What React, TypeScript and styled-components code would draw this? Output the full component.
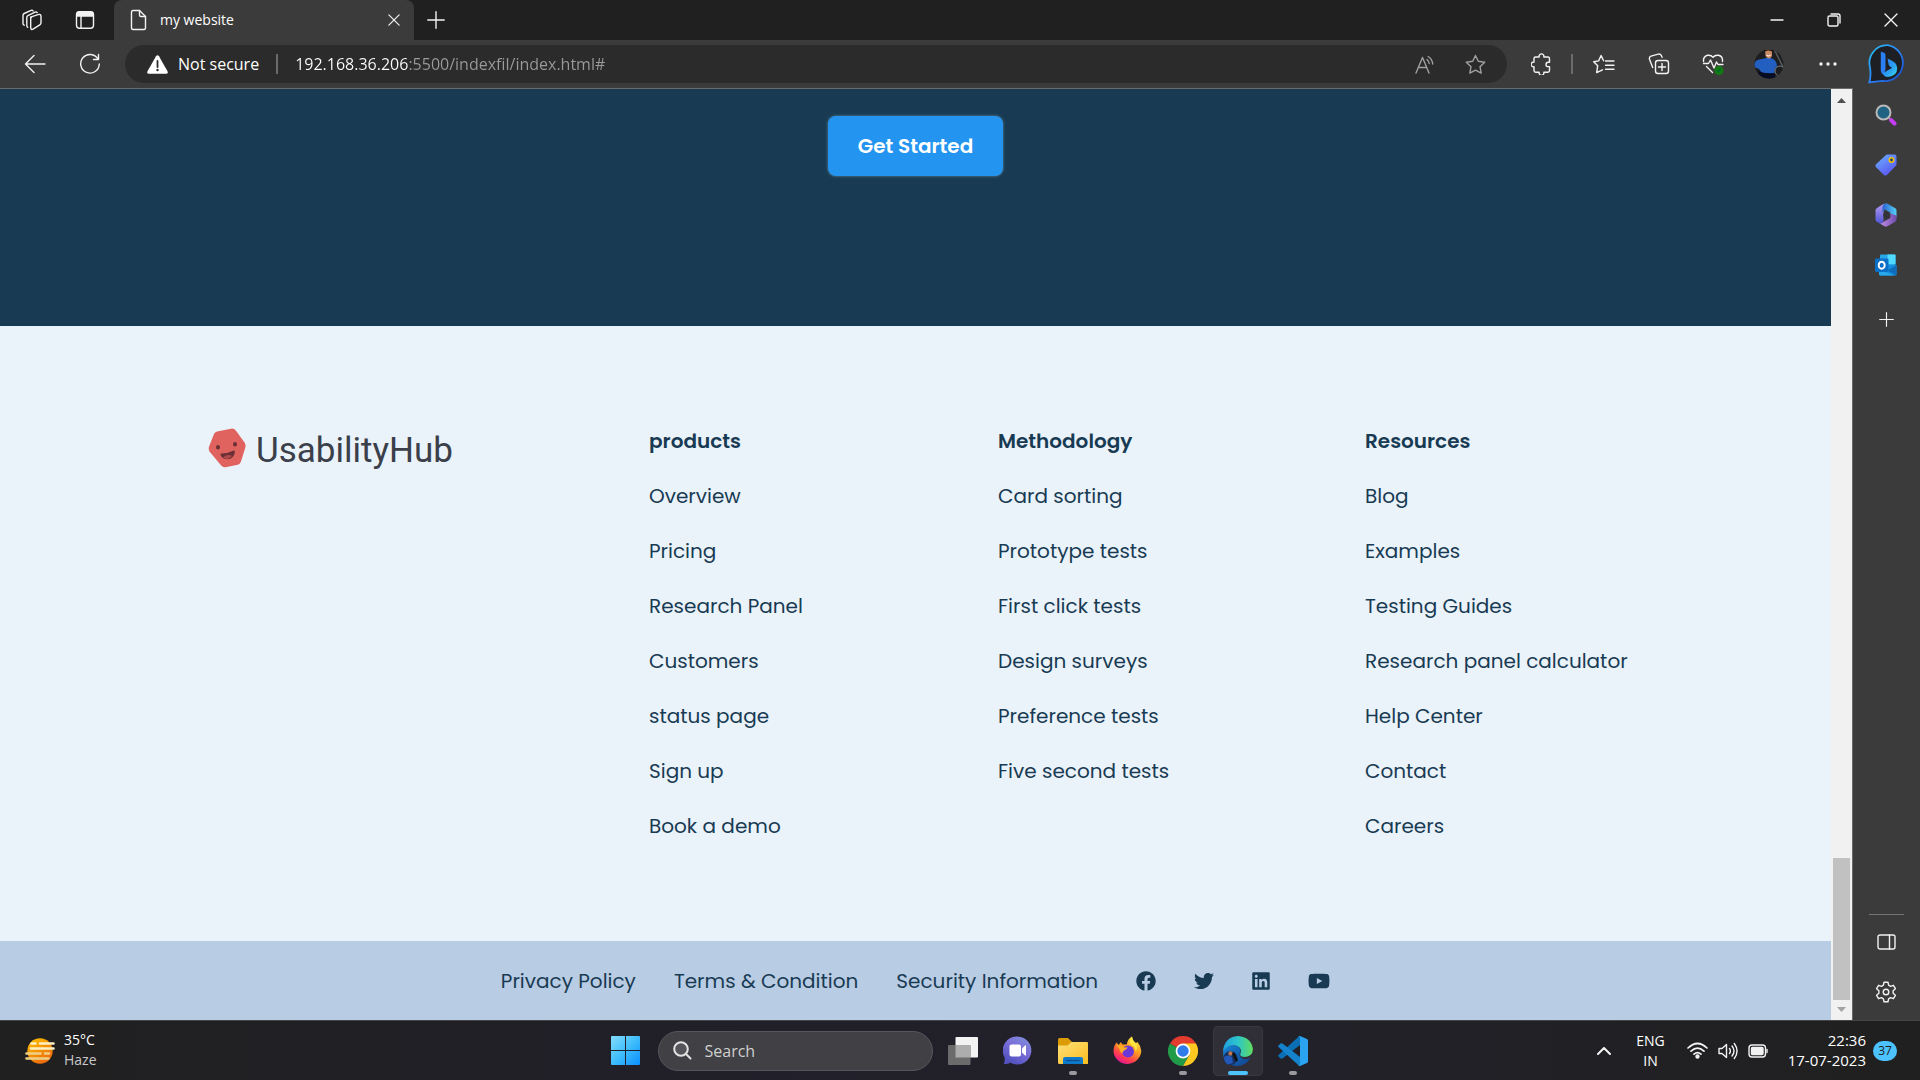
import React from "react";
import styled, { createGlobalStyle } from "styled-components";
import { FaFacebook, FaLinkedin, FaTwitter, FaYoutube } from "react-icons/fa";

const uiFont = `"Segoe UI", "Open Sans", "Noto Sans", sans-serif`;
const siteFont = `Poppins, Inter, "Open Sans", sans-serif`;

const GlobalStyle = createGlobalStyle`
  *, *::before, *::after { box-sizing: border-box; }
  body { margin: 0; background: #202020; font-family: ${uiFont}; }
  button { border: 0; padding: 0; background: none; color: inherit; font: inherit; cursor: pointer; }
  a { color: inherit; text-decoration: none; }
  svg { display: block; flex: none; }
  ul { list-style: none; margin: 0; padding: 0; }
`;

const Desktop = styled.div`
  display: flex;
  flex-direction: column;
  min-height: 100vh;
`;

/* ---------- browser chrome ---------- */

const TabStrip = styled.header`
  display: flex;
  height: 40px;
  padding-left: 5px;
  background: #202020;
  color: #fff;
`;

const IconButton = styled.button<{ $w?: number }>`
  display: flex;
  flex: none;
  align-items: center;
  justify-content: center;
  width: ${(p) => p.$w ?? 55}px;
  height: 40px;
`;

const Tab = styled.div`
  display: flex;
  align-items: center;
  width: 300px;
  margin-left: 3px;
  padding-left: 16px;
  border-radius: 8px 8px 0 0;
  background: #3b3b3b;
`;

const TabTitle = styled.span`
  flex: 1;
  padding-left: 13px;
  font-size: 14px;
  line-height: 20px;
`;

const WindowButtons = styled.div`
  display: flex;
  margin-left: auto;
`;

const Toolbar = styled.div`
  display: flex;
  align-items: center;
  height: 48px;
  padding: 0 5px 0 7px;
  background: #3b3b3b;
  color: #fff;
`;

const AddressBar = styled.div`
  display: flex;
  flex: 1;
  align-items: center;
  height: 38px;
  margin: 0 7px 0 8px;
  padding: 0 7px 0 22px;
  border-radius: 19px;
  background: #2b2b2b;
  font-size: 16px;
`;

const SecurityLabel = styled.span`
  padding-left: 10px;
  line-height: 24px;
`;

const Separator = styled.span<{ $gap: number }>`
  flex: none;
  width: 2px;
  height: 20px;
  margin: 0 ${(p) => p.$gap}px;
  background: #6b6b6b;
`;

const AddressInput = styled.input`
  flex: 1;
  min-width: 0;
  height: 30px;
  padding: 0;
  border: 0;
  outline: 0;
  color: #9a9a9a;
  font: 16px ${uiFont};
  background: linear-gradient(90deg, #fff 113px, #9a9a9a 113px);
  background-clip: text;
  -webkit-background-clip: text;
  -webkit-text-fill-color: transparent;
`;

const BrowserBody = styled.div`
  display: flex;
  flex: 1;
  background: #3b3b3b;
`;

const Viewport = styled.main`
  display: flex;
  flex: 1;
  border-top: 1px solid #6a6a6a;
  border-right: 1px solid #6a6a6a;
`;

const ScrollTrack = styled.div`
  display: flex;
  flex-direction: column;
  align-items: center;
  justify-content: space-between;
  width: 21px;
  padding: 9px 2px 8px;
  background: #f1f1f1;
`;

const ScrollThumb = styled.div`
  width: 17px;
  height: 142px;
  margin: auto 0 7px;
  background: #c1c1c1;
`;

const Sidebar = styled.aside`
  display: flex;
  flex-direction: column;
  align-items: center;
  width: 67px;
  padding: 2px 1px 3px 0;
  color: #fff;
`;

const SideButton = styled.button<{ $gap?: number }>`
  display: flex;
  align-items: center;
  justify-content: center;
  width: 50px;
  height: 50px;
  margin-top: ${(p) => p.$gap ?? 0}px;
`;

const SideRule = styled.div`
  width: 35px;
  height: 1px;
  margin: auto 0 2px;
  background: #757575;
`;

/* ---------- web page ---------- */

const Page = styled.div`
  flex: 1;
  background: #eaf2fa;
  color: #183b53;
  font-family: ${siteFont};
`;

const Hero = styled.section`
  display: flex;
  justify-content: center;
  padding: 27px 0 150px;
  background: #183b53;
`;

const CallToAction = styled.button`
  && {
    height: 60px;
    padding: 0 30px;
    border-radius: 8px;
    background: #2394ef;
    box-shadow: 0 0 3px rgba(150, 190, 220, 0.6);
    color: #fff;
    font: 600 20px ${siteFont};
  }
`;

const FooterGrid = styled.footer`
  display: grid;
  grid-template-columns: 441fr 349fr 367fr 466fr;
  padding: 100px 0 100px 208px;
`;

const Brand = styled.a`
  display: flex;
  align-items: center;
  align-self: start;
  gap: 10px;
  height: 44px;
  color: #3a3f4a;
  font: 35px Roboto, sans-serif;
`;

const BrandName = styled.span`
  padding-top: 4px;
`;

const LinkColumn = styled.ul`
  display: flex;
  flex-direction: column;
  gap: 25px;
  font-size: 20px;
  line-height: 30px;
`;

const ColumnTitle = styled.li`
  font-weight: 600;
`;

const LegalBar = styled.nav`
  display: flex;
  align-items: center;
  justify-content: center;
  gap: 38px;
  padding: 25px 0 24px;
  background: #b8cce4;
  font-size: 20px;
  line-height: 30px;
`;

const SocialLink = styled.a<{ $w: number }>`
  svg {
    width: ${(p) => p.$w}px;
    height: 20px;
  }
`;

/* ---------- taskbar ---------- */

const Taskbar = styled.footer`
  display: grid;
  grid-template-columns: 1fr auto 1fr;
  align-items: center;
  height: 60px;
  padding: 0 23px 0 21px;
  border-top: 1px solid #454547;
  background: linear-gradient(90deg, #202020, #211f29 40%, #22212a 62%, #202020);
  color: #fff;
  font-size: 14px;
  line-height: 20px;
`;

const Weather = styled.button`
  display: flex;
  align-items: center;
  justify-self: start;
  gap: 9px;
  margin-left: 4px;
  text-align: left;
`;

const Lines = styled.span<{ $align?: string }>`
  display: flex;
  flex-direction: column;
  padding-bottom: ${(p) => (p.$align === "center" ? 0 : 2)}px;
  font-size: ${(p) => (p.$align === "right" ? 15 : 14)}px;
  text-align: ${(p) => p.$align ?? "left"};
`;

const Muted = styled.span`
  color: #c8c8c8;
`;

const Apps = styled.div`
  display: flex;
  align-items: center;
  gap: 5px;
`;

const AppButton = styled.button<{ $active?: boolean }>`
  position: relative;
  display: flex;
  align-items: center;
  justify-content: center;
  width: 50px;
  height: 50px;
  border-radius: 5px;
  background: ${(p) => (p.$active ? "#302f38" : "none")};
  box-shadow: ${(p) => (p.$active ? "inset 0 0 0 1px #3a3942" : "none")};
`;

const RunningMark = styled.span<{ $active?: boolean }>`
  position: absolute;
  bottom: 1px;
  left: 50%;
  width: ${(p) => (p.$active ? 20 : 8)}px;
  height: 4px;
  border-radius: 2px;
  background: ${(p) => (p.$active ? "#4cc2ff" : "#9a999d")};
  transform: translateX(-50%);
`;

const SearchBox = styled.label`
  display: flex;
  align-items: center;
  gap: 13px;
  width: 275px;
  height: 40px;
  margin-left: 2px;
  padding-left: 14px;
  border: 1px solid #57555c;
  border-radius: 20px;
  background: #414045;
`;

const SearchInput = styled.input`
  flex: 1;
  min-width: 0;
  padding: 0;
  border: 0;
  outline: 0;
  background: none;
  color: #fff;
  font: 16px ${uiFont};
  &::placeholder { color: #d0d0d0; opacity: 1; }
`;

const Tray = styled.div`
  display: flex;
  align-items: center;
  justify-self: end;
`;

const TrayGroup = styled.button`
  display: flex;
  align-items: center;
  gap: 10px;
  margin: 0 20px 0 22px;
`;

const Badge = styled.span`
  width: 24px;
  height: 20px;
  margin-left: 7px;
  border-radius: 10px;
  background: #4cc2ff;
  color: #1b1b1b;
  font-size: 12px;
  line-height: 20px;
  text-align: center;
`;

/* ---------- drawings ---------- */

const Line = styled.svg.attrs({ fill: "none", stroke: "currentColor", strokeLinecap: "round", strokeLinejoin: "round" })<{ $dim?: boolean }>`
  color: ${(p) => (p.$dim ? "#a0a0a0" : "#f2f2f2")};
  stroke-width: 1.4;
`;

const Workspaces = () => (
  <Line width="22" height="22" viewBox="0 0 22 22">
    <path d="M9.5 8.2 17 5.6q3-.8 3 1.7v6.5q0 1.4-1.2 2L12 20.2q-2 .9-2.3-1.3V9.8q0-1.2 1-1.7" />
    <path d="M6.8 18.3q-1-.4-1-1.7V8.4q0-1.3 1.1-1.8l7.2-3.4q1.4-.5 2.1.4" />
    <path d="M3.2 16.2q-1.2-.5-1.2-2V6.4q0-1.3 1.2-1.9L9.5 1.6q1.7-.7 2.6.3" />
  </Line>
);
const TabActions = () => (
  <Line width="20" height="20" viewBox="0 0 20 20">
    <rect x="1.5" y="1.8" width="17" height="16.4" rx="3" />
    <path d="M2 3.5Q2.4 2 4 2h12q1.6 0 2 1.5V6H2z" fill="currentColor" />
    <path d="M6 6v12" />
  </Line>
);
const FileIcon = () => (
  <Line width="17" height="22" viewBox="0 0 17 22">
    <path d="M3 1.5h6.5l6 6V19q0 1.5-1.5 1.5H3Q1.5 20.500 1.500 19V3q0-1.500 1.500-1.500z" />
    <path d="M9.500 1.500V6q0 1.500 1.500 1.500h4.500" />
  </Line>
);
const Cross = ({ size = 12 }: { size?: number }) => (
  <Line width={size} height={size} viewBox="0 0 14 14"><path d="m1 1 12 12M13 1 1 13" /></Line>
);
const Plus = ({ size = 18 }: { size?: number }) => (
  <Line width={size} height={size} viewBox="0 0 18 18"><path d="M9 .8v16.400M.8 9h16.400" /></Line>
);
const BackArrow = () => (
  <Line width="22" height="20" viewBox="0 0 22 20"><path d="M21 10H1.500M10 1.500 1.500 10l8.500 8.500" /></Line>
);
const Reload = () => (
  <Line width="22" height="22" viewBox="0 0 22 22"><path d="M19 6A9.300 9.300 0 1 0 20.300 11M19.500 1.500v5h-5" /></Line>
);
const Warning = () => (
  <svg width="21" height="19" viewBox="0 0 21 19">
    <path d="M9 1.200q1.500-2 3 0l8.500 15q1 2.500-1.500 2.500H2q-2.500 0-1.500-2.500z" fill="#fff" />
    <path d="M10.500 6v6" stroke="#2b2b2b" strokeWidth="1.800" strokeLinecap="round" />
    <circle cx="10.500" cy="15" r="1.200" fill="#2b2b2b" />
  </svg>
);
const ReadAloud = () => (
  <Line $dim width="20" height="19" viewBox="0 0 20 19">
    <path d="M1 18 7.500 2.500 14 18M3.500 12.500h8M12 4.500q1.800 1.500 2.200 4M13.200 1.500q4 2.500 4.500 7.500" />
  </Line>
);
const starPath = "m10.500 1.500 2.800 5.800 6.400.9-4.700 4.500 1.200 6.400-5.700-3-5.700 3 1.200-6.400L1.300 8.200l6.400-.9z";
const Star = () => (
  <Line $dim width="21" height="21" viewBox="0 0 21 21"><path d={starPath} /></Line>
);
const FavoritesList = () => (
  <Line width="22" height="21" viewBox="0 0 22 21">
    <path d="m10.600 6.700-2.500-5.200L5.600 6.900l-4.900.8 4 4-1 6.900 5.800-2.800M12.500 7h8.500M12.500 11.200h8.500M12.500 15.300h8.500" />
  </Line>
);
const Puzzle = () => (
  <Line width="20" height="22" viewBox="0 0 20 22">
    <path d="M4.500 4h3.700a2.400 2.400 0 1 1 4.600 0h4q1.700 0 1.700 1.700v3.500h-1.300a2.200 2.200 0 0 0 0 4.400h1.300v4q0 1.700-1.700 1.700h-4a2.400 2.400 0 1 1-4.600 0H4.700Q3 19.300 3 17.600v-3.800a2.400 2.400 0 1 1 0-4.700V5.500Q3 4 4.500 4z" />
  </Line>
);
const Collections = () => (
  <Line width="22" height="22" viewBox="0 0 22 22">
    <rect x="7.500" y="7.500" width="13" height="13" rx="2.500" />
    <path d="M14 10.500v7M10.500 14h7M4.700 14.500 1.500 6.200Q.9 4 3 3.200l7.300-2.100q2-.5 2.900 1.200l.9 2" />
  </Line>
);
const HeartPulse = () => (
  <Line width="23" height="22" viewBox="0 0 23 22">
    <path d="M1.500 8.500Q1 3.500 5.500 2.300q3.800-.5 5.500 2 2-2.500 5.500-2 4.500 1 4 6.200M1.500 10.500h5L8.500 7l3.500 8 2.500-6 1.500 2.500h5M4.500 13.500l6 6" />
    <circle cx="17" cy="17.500" r="4.500" fill="#107c10" stroke="none" />
    <path d="m15.500 17.700 1 1 2-2.400" stroke="#063" />
  </Line>
);
const Avatar = () => (
  <svg width="30" height="30" viewBox="0 0 30 30">
    <defs><clipPath id="avatarRound"><circle cx="15" cy="15" r="14.500" /></clipPath></defs>
    <g clipPath="url(#avatarRound)">
      <rect width="30" height="30" fill="#1d1e20" />
      <path d="m20 0 10 20M25 0l5 12" stroke="#54585a" strokeWidth="1.500" />
      <path d="M0 16Q1 10 8 10l4-1h5q6 1.500 6 9l-2 1-1 6-12-1-3-4-5-2z" fill="#235fc0" />
      <path d="M11 1q4-3 7 0v6q-3 5-6.500 0z" fill="#c98a63" />
      <path d="M10.500 1.500q4-4 8 0l-.5 1q-4-2-7 0z" fill="#191310" />
      <path d="M12.500 6.200q2 1.600 4 0" stroke="#fff" fill="none" />
      <path d="M4 22q7 3 16 2l2 7H6z" fill="#060c22" />
      <circle cx="26" cy="22" r="5" fill="none" stroke="#777d82" />
    </g>
  </svg>
);
const Dots = () => (
  <svg width="18" height="4" viewBox="0 0 18 4" fill="#f2f2f2"><circle cx="2" cy="2" r="1.700" /><circle cx="9" cy="2" r="1.700" /><circle cx="16" cy="2" r="1.700" /></svg>
);
const BingChat = () => (
  <svg width="38" height="40" viewBox="0 0 38 40">
    <defs>
      <linearGradient id="bingRing" x1="0" y1="0" x2="1" y2="1"><stop stopColor="#27c5f5" /><stop offset=".5" stopColor="#2c83f6" /><stop offset="1" stopColor="#1546c8" /></linearGradient>
      <linearGradient id="bingB" x1="0" y1="0" x2="1" y2="1"><stop stopColor="#2c7df0" /><stop offset=".55" stopColor="#2c9cf2" /><stop offset="1" stopColor="#35e0e8" /></linearGradient>
    </defs>
    <path d="M19.500 1.200a17.800 17.800 0 1 1-5.300 35.700Q8 37.500 1.300 38.400q2-6 .7-15A17.800 17.800 0 0 1 19.500 1.200z" fill="#1d1f24" stroke="url(#bingRing)" strokeWidth="1.800" />
    <path d="M12.800 7.500 16 8.700q1.500.6 1.500 2.300v14.500l-2 5.500q-2.700-1.500-2.700-4.500z" fill="#2a7ff2" />
    <path d="M19.500 14.500q9.500 3.500 9.700 9.500.2 8-9.200 9-4.500-.2-5-4l9.200-5.200q-2.800-.8-3.500-3z" fill="url(#bingB)" />
  </svg>
);
const SearchColor = () => (
  <svg width="22" height="22" viewBox="0 0 22 22">
    <path d="m13.500 13.500 2 2" stroke="#8a8a8a" strokeWidth="2" />
    <path d="m16 16 3.500 3.500" stroke="#c63cf0" strokeWidth="4" strokeLinecap="round" />
    <circle cx="8.500" cy="8.500" r="7" fill="#1f6282" stroke="#b9b9b9" strokeWidth="2" />
  </svg>
);
const PriceTag = () => (
  <svg width="22" height="22" viewBox="0 0 22 22">
    <defs><linearGradient id="tagBlue" x1="0" y1="0" x2=".7" y2="1"><stop stopColor="#6bb5ff" /><stop offset="1" stopColor="#5a54f2" /></linearGradient></defs>
    <path d="M11 .9q.6-.5 1.400-.5h7q2.100 0 2.100 2.100v7.700q0 .8-.6 1.500l-9 9.300q-1.500 1.200-3 0l-7.800-7.700q-1.300-1.500 0-3z" fill="url(#tagBlue)" />
    <circle cx="16.500" cy="6" r="2.200" fill="#173a7a" stroke="#f2c400" strokeWidth="1.600" />
  </svg>
);
const Microsoft365 = () => (
  <svg width="22" height="24" viewBox="0 0 22 24">
    <defs>
      <linearGradient id="m1" x1="0" y1="0" x2="0" y2="1"><stop stopColor="#b59af0" /><stop offset="1" stopColor="#4f57d6" /></linearGradient>
      <linearGradient id="m2"><stop stopColor="#2a62d0" /><stop offset="1" stopColor="#55d0f5" /></linearGradient>
      <linearGradient id="m3"><stop stopColor="#c493ea" /><stop offset="1" stopColor="#6e4bab" /></linearGradient>
    </defs>
    <path d="M9 .8Q5 3 1.700 5.200.5 6 .5 7.500v9q0 1.500 1.200 2.300l3 1.700q3.300.5 3.800-3V8q0-4 .5-7.200z" fill="url(#m1)" />
    <path d="M9.500.700q1.500-.8 3 0l7.800 4.500q1.200.8 1.200 2.300v7L15.500 11q0-1.500-1.200-2L10 6.500 7.500 9V4q0-2 2-3.300z" fill="url(#m2)" />
    <path d="M21.500 12.500v4q0 1.500-1.200 2.300l-7.800 4.500q-1.500.8-3 0l-5-3q3 .5 4.500-1.800l5.500-3q1-.6 1-2V10.500z" fill="url(#m3)" />
    <circle cx="11.500" cy="12.200" r="3.300" fill="#33343a" />
  </svg>
);
const Outlook = () => (
  <svg width="22" height="22" viewBox="0 0 22 22">
    <rect x="5" y=".5" width="15.500" height="15" rx="1" fill="#28a8ea" />
    <path d="M12.500.500h7q1 0 1 1v8.500h-8z" fill="#50d9ff" />
    <path d="M4 11h17.500v9q0 1.500-1.500 1.500H5.500Q4 21.500 4 20z" fill="#1490df" />
    <path d="m21.500 11-9 5.500 9 5z" fill="#0f6cbd" />
    <path d="M4 15.500 19 21.500H5.500Q4 21.500 4 20z" fill="#28a8ea" />
    <rect x="0" y="4.500" width="13.500" height="13.500" rx="1.300" fill="#0a6fc7" />
    <ellipse cx="6.700" cy="11.200" rx="3" ry="3.500" fill="none" stroke="#fff" strokeWidth="1.900" />
  </svg>
);
const PanelIcon = () => (
  <Line width="19" height="16" viewBox="0 0 19 16"><rect x="1" y="1" width="17" height="14" rx="2" /><path d="M12.500 1v14" /></Line>
);
const Gear = () => (
  <Line width="22" height="22" viewBox="0 0 22 22">
    <path d="M9 1.200h4l.6 3 1.900 1.100 2.900-1 2 3.400-2.300 2v2.600l2.300 2-2 3.400-2.900-1-1.900 1.100-.6 3H9l-.6-3-1.900-1.100-2.900 1-2-3.400 2.300-2V9.700l-2.300-2 2-3.400 2.900 1 1.900-1.100z" />
    <circle cx="11" cy="11" r="2.800" />
  </Line>
);
const FaceLogo = () => (
  <svg width="38" height="40" viewBox="0 0 38 40">
    <path d="M9 3.500 23 .7q3-.5 5 2l8.700 12q1.300 2 .7 4.500L33 33.500q-.8 2.500-3.300 3.200l-12 2.500q-2.700.5-4.500-1.600L1.500 23.500q-1.400-2-.6-4.500L6 6q.8-2 3-2.500z" fill="#e0635f" />
    <ellipse cx="10" cy="19.200" rx="2" ry="2.200" fill="#6b3036" />
    <ellipse cx="27" cy="16.200" rx="2" ry="2.200" fill="#6b3036" />
    <path d="M13.500 25.500q6.500 0 11.500-2.700 2-.8 1.900 1.400-1.100 6.500-7.300 7.100-5.200 0-7-4-.6-1.700.9-1.800z" fill="#6b3036" />
    <path d="M15 29.500q4.500-4 9-1.500-4 5-9 1.500z" fill="#b04a4b" />
  </svg>
);
const HazeSun = () => (
  <svg width="30" height="26" viewBox="0 0 30 26">
    <defs><linearGradient id="sun" x1="0" y1="0" x2=".6" y2="1"><stop stopColor="#ffc400" /><stop offset="1" stopColor="#ec6a0c" /></linearGradient></defs>
    <circle cx="15" cy="13" r="12.700" fill="url(#sun)" />
    <g strokeWidth="2.600" strokeLinecap="round">
      <path d="M6.500 5.500h4M15 5.500h13.500M6 10.500h22.500" stroke="#fff0c2" />
      <path d="M1.500 15.500h14M20 15.500h4M1.500 20.500h22" stroke="#efcf85" />
    </g>
  </svg>
);
const WindowsLogo = () => (
  <svg width="29" height="29" viewBox="0 0 29 29">
    <defs><linearGradient id="win" gradientUnits="userSpaceOnUse" x1="0" y1="0" x2="29" y2="29"><stop stopColor="#84dcff" /><stop offset=".5" stopColor="#3fbdfb" /><stop offset="1" stopColor="#0a8fff" /></linearGradient></defs>
    <path d="M0 1q0-1 1-1h13v14H0zM15 0h13q1 0 1 1v13H15zM0 15h14v14H1q-1 0-1-1zM15 15h14v13q0 1-1 1H15z" fill="url(#win)" />
  </svg>
);
const SearchGlass = () => (
  <svg width="19" height="19" viewBox="0 0 19 19" fill="none" stroke="#e4e4e4" strokeWidth="2" strokeLinecap="round">
    <circle cx="8" cy="8" r="6.800" fill="#55545a" /><path d="m13 13 4.500 4.500" />
  </svg>
);
const TaskView = () => (
  <svg width="30" height="28" viewBox="0 0 30 28">
    <rect x="7.500" y="0" width="22.500" height="20.500" rx="1" fill="#f3f3f3" />
    <rect x="0" y="8" width="22.500" height="20" rx="1" fill="#6b6b6b" />
    <path d="M7.500 8h15v12.500h-15z" fill="#adadad" />
  </svg>
);
const ChatApp = () => (
  <svg width="29" height="29" viewBox="0 0 29 29">
    <defs><linearGradient id="chat" x1="1" y1="0" x2=".4" y2="1"><stop stopColor="#8294dc" /><stop offset=".5" stopColor="#7a6fd8" /><stop offset="1" stopColor="#5352c0" /></linearGradient></defs>
    <path d="M14.500.500a14 14 0 1 1-7 26.200Q4 28.500.8 28q1.200-3 .8-6.500A14 14 0 0 1 14.500.500z" fill="url(#chat)" />
    <rect x="6.500" y="8.500" width="11.500" height="12" rx="2" fill="#fff" />
    <path d="m19 12.500 3-3q1-.5 1 .7v8.700q0 1-1 .5l-3-3z" fill="#fff" />
  </svg>
);
const Folder = () => (
  <svg width="30" height="28" viewBox="0 0 30 28">
    <defs><linearGradient id="fold" x1="0" y1="0" x2="1" y2="1"><stop stopColor="#ffe07a" /><stop offset="1" stopColor="#f9bd1e" /></linearGradient></defs>
    <path d="M0 2.500Q0 1 1.500 1H10l3.500 3.500V11H0z" fill="#dc9c05" />
    <path d="M0 8.500h9.500L13.500 5H29q1 0 1 1v21H1.500Q0 27 0 25.500z" fill="url(#fold)" />
    <path d="M5 27v-5q0-2 2-2h16q2 0 2 2v5z" fill="#0f79c9" />
    <path d="M8.500 23.500h13" stroke="#0a4c8b" strokeWidth="1.200" />
  </svg>
);
const Firefox = () => (
  <svg width="29" height="30" viewBox="0 0 29 30">
    <defs><linearGradient id="ff" x1=".8" y1=".1" x2=".3" y2="1"><stop stopColor="#ffe13d" /><stop offset=".4" stopColor="#ff9a22" /><stop offset=".75" stopColor="#ff3b50" /><stop offset="1" stopColor="#e01597" /></linearGradient></defs>
    <path d="M3.500 6.500q1.500 1 2 2.500L8 6q.5 1.500 1.800 2.500h4Q14.500 3 19 .5q.5 4 4 6.500l1.500-1Q28 10 28.300 15A14 14 0 0 1 .5 16Q.3 10.500 3.500 6.500z" fill="url(#ff)" />
    <circle cx="15" cy="15.500" r="6" fill="#6a38d8" />
    <path d="M3.500 9Q9 8.500 11 11.500l3.500-.3q-.3 2-3 3-2 .8-1.800 3-3-1-3-4z" fill="#ffad24" />
    <path d="M19 .5q-3.500 4-1 8 5 2.500 4.500 7 2.500-3 1.300-7.300Q19.500 5.500 19 .5z" fill="#ffe641" />
  </svg>
);
const Chrome = () => (
  <svg width="30" height="30" viewBox="0 0 30 30">
    <path d="M15 15 2 7.500a15 15 0 0 1 26 0z" fill="#e33b2e" />
    <path d="M15 15 2 7.500A15 15 0 0 0 15 30l6.500-11.200z" fill="#229b49" />
    <path d="M15 7.500h13A15 15 0 0 1 15 30l6.500-11.200z" fill="#fdc920" />
    <circle cx="15" cy="15" r="7.400" fill="#fff" /><circle cx="15" cy="15" r="5.700" fill="#2f7bea" />
  </svg>
);
const Edge = () => (
  <svg width="30" height="30" viewBox="0 0 30 30">
    <defs>
      <linearGradient id="edgeTop"><stop stopColor="#1f9fe0" /><stop offset=".5" stopColor="#2cc6ca" /><stop offset="1" stopColor="#62dc5b" /></linearGradient>
      <linearGradient id="edgeLow" x1="0" y1="0" x2="1" y2="1"><stop stopColor="#1788d8" /><stop offset="1" stopColor="#103f8c" /></linearGradient>
    </defs>
    <path d="M0 16Q1 9 10 9q7 .5 7.500 6-3 5 2 7.500 4 1.500 8-.5-5 8-13.500 8Q0 29 0 16z" fill="url(#edgeLow)" />
    <path d="M0 15Q1.500 1 15 0q13 1 15 13-.5 8-9 8-5-.5-3.500-4 1.500-3-1.500-6Q8 5.500 0 15z" fill="url(#edgeTop)" />
    <circle cx="7.500" cy="22" r="7" fill="#15305f" />
    <path d="M1 21q3-3 8 0l1 6-5 1.500q-4-2-4-7.500z" fill="#2458b8" />
    <circle cx="7.500" cy="17.500" r="2.200" fill="#b57755" />
    <path d="m10 17 4 8" stroke="#111" strokeWidth="2.500" />
  </svg>
);
const VsCode = () => (
  <svg width="30" height="30" viewBox="0 0 30 30">
    <path d="M22 0v9L4.500 22.500q-1 .7-1.800 0L.5 20.500q-.8-.8 0-1.600L20.500.7z" fill="#0b6fb5" />
    <path d="M22 30v-9L4.500 7.500q-1-.7-1.800 0L.5 9.500q-.8.800 0 1.600l20 18.200z" fill="#1583cc" />
    <path d="m22 0 7 3q1 .5 1 1.600v20.800q0 1.100-1 1.600l-7 3q-1.200.3-2-.7 2 .8 2-1.300V2q0-2-2-1.300.8-1 2-.7z" fill="#2aa3f0" />
  </svg>
);
const Wifi = () => (
  <Line width="21" height="17" viewBox="0 0 21 17">
    <path d="M1 6q9.500-9 19 0M4 9.200q6.500-6.200 13 0M7 12.200q3.500-3.200 7 0" strokeWidth="1.700" /><circle cx="10.500" cy="14.500" r="1.500" fill="currentColor" />
  </Line>
);
const Speaker = () => (
  <Line width="20" height="18" viewBox="0 0 20 18">
    <path d="M1 6.500h3L8.500 2.500v13L4 11.500H1zM11.500 6.500q1.800 2.500 0 5M14 4q4 5 0 10M16.300 1.500q5.500 7.500 0 15" />
  </Line>
);
const Battery = () => (
  <Line width="20" height="14" viewBox="0 0 20 14">
    <rect x="1" y="1" width="16.500" height="12" rx="3" /><rect x="3.500" y="3.500" width="11.500" height="7" rx="1" fill="currentColor" /><path d="M19 5.500v3" />
  </Line>
);
const Chevron = () => (
  <Line width="14" height="8" viewBox="0 0 14 8"><path d="m1 7 6-6 6 6" strokeWidth="2" /></Line>
);

/* ---------- content ---------- */

const columns = [
  { title: "products", links: ["Overview", "Pricing", "Research Panel", "Customers", "status page", "Sign up", "Book a demo"] },
  { title: "Methodology", links: ["Card sorting", "Prototype tests", "First click tests", "Design surveys", "Preference tests", "Five second tests"] },
  { title: "Resources", links: ["Blog", "Examples", "Testing Guides", "Research panel calculator", "Help Center", "Contact", "Careers"] },
];

const socials = [
  { name: "Facebook", Icon: FaFacebook, width: 20 },
  { name: "Twitter", Icon: FaTwitter, width: 20 },
  { name: "LinkedIn", Icon: FaLinkedin, width: 18 },
  { name: "YouTube", Icon: FaYoutube, width: 22 },
];

const apps = [
  { name: "Task view", Icon: TaskView },
  { name: "Chat", Icon: ChatApp },
  { name: "File Explorer", Icon: Folder, running: true },
  { name: "Firefox", Icon: Firefox },
  { name: "Chrome", Icon: Chrome, running: true },
  { name: "Edge", Icon: Edge, running: true, active: true },
  { name: "Visual Studio Code", Icon: VsCode, running: true },
];

const sideTools = [
  { name: "Search", Icon: SearchColor },
  { name: "Shopping", Icon: PriceTag },
  { name: "Microsoft 365", Icon: Microsoft365 },
  { name: "Outlook", Icon: Outlook },
];

export default function App() {
  return (
    <Desktop>
      <GlobalStyle />
      <TabStrip>
        <IconButton $w={53} aria-label="Workspaces"><Workspaces /></IconButton>
        <IconButton $w={53} aria-label="Tab actions"><TabActions /></IconButton>
        <Tab>
          <FileIcon />
          <TabTitle>my website</TabTitle>
          <IconButton $w={40} aria-label="Close tab"><Cross /></IconButton>
        </Tab>
        <IconButton $w={43} aria-label="New tab"><Plus /></IconButton>
        <WindowButtons>
          <IconButton $w={57} aria-label="Minimize"><Line width="14" height="2" viewBox="0 0 14 2"><path d="M1 1h12" /></Line></IconButton>
          <IconButton $w={57} aria-label="Restore">
            <Line width="14" height="14" viewBox="0 0 14 14"><rect x="1" y="3" width="10" height="10" rx="1.500" /><path d="M4 1h7q2 0 2 2v7" /></Line>
          </IconButton>
          <IconButton $w={58} aria-label="Close"><Cross size={14} /></IconButton>
        </WindowButtons>
      </TabStrip>

      <Toolbar>
        <IconButton aria-label="Back"><BackArrow /></IconButton>
        <IconButton aria-label="Refresh"><Reload /></IconButton>
        <AddressBar>
          <Warning />
          <SecurityLabel>Not secure</SecurityLabel>
          <Separator $gap={17} />
          <AddressInput aria-label="Address" defaultValue="192.168.36.206:5500/indexfil/index.html#" />
          <IconButton $w={50} aria-label="Read aloud"><ReadAloud /></IconButton>
          <IconButton $w={50} aria-label="Add to favorites"><Star /></IconButton>
        </AddressBar>
        <IconButton $w={54} aria-label="Extensions"><Puzzle /></IconButton>
        <Separator $gap={3} />
        <IconButton aria-label="Favorites"><FavoritesList /></IconButton>
        <IconButton aria-label="Collections"><Collections /></IconButton>
        <IconButton aria-label="Browser essentials"><HeartPulse /></IconButton>
        <IconButton aria-label="Profile"><Avatar /></IconButton>
        <IconButton $w={63} aria-label="Settings and more"><Dots /></IconButton>
        <IconButton $w={56} aria-label="Bing chat"><BingChat /></IconButton>
      </Toolbar>

      <BrowserBody>
        <Viewport>
          <Page>
            <Hero><CallToAction>Get Started</CallToAction></Hero>
            <FooterGrid>
              <Brand href="#"><FaceLogo /><BrandName>UsabilityHub</BrandName></Brand>
              {columns.map((column) => (
                <LinkColumn key={column.title}>
                  <ColumnTitle>{column.title}</ColumnTitle>
                  {column.links.map((link) => (
                    <li key={link}><a href="#">{link}</a></li>
                  ))}
                </LinkColumn>
              ))}
            </FooterGrid>
            <LegalBar>
              <a href="#">Privacy Policy</a>
              <a href="#">Terms &amp; Condition</a>
              <a href="#">Security Information</a>
              {socials.map(({ name, Icon, width }) => (
                <SocialLink key={name} href="#" aria-label={name} $w={width}><Icon /></SocialLink>
              ))}
            </LegalBar>
          </Page>
          <ScrollTrack>
            <svg width="9" height="5" viewBox="0 0 9 5"><path d="M0 5 4.500 0 9 5z" fill="#505050" /></svg>
            <ScrollThumb />
            <svg width="9" height="5" viewBox="0 0 9 5"><path d="m0 0 4.500 5L9 0z" fill="#a3a3a3" /></svg>
          </ScrollTrack>
        </Viewport>
        <Sidebar>
          {sideTools.map(({ name, Icon }) => (
            <SideButton key={name} aria-label={name}><Icon /></SideButton>
          ))}
          <SideButton $gap={4} aria-label="Customize"><Plus size={15} /></SideButton>
          <SideRule />
          <SideButton aria-label="Hide sidebar"><PanelIcon /></SideButton>
          <SideButton aria-label="Sidebar settings"><Gear /></SideButton>
        </Sidebar>
      </BrowserBody>

      <Taskbar>
        <Weather>
          <HazeSun />
          <Lines><span>35°C</span><Muted>Haze</Muted></Lines>
        </Weather>
        <Apps>
          <AppButton aria-label="Start"><WindowsLogo /></AppButton>
          <SearchBox>
            <SearchGlass />
            <SearchInput aria-label="Search" placeholder="Search" />
          </SearchBox>
          {apps.map(({ name, Icon, running, active }) => (
            <AppButton key={name} aria-label={name} $active={active}>
              <Icon />
              {running && <RunningMark $active={active} />}
            </AppButton>
          ))}
        </Apps>
        <Tray>
          <IconButton $w={64} aria-label="Hidden icons"><Chevron /></IconButton>
          <Lines $align="center"><span>ENG</span><span>IN</span></Lines>
          <TrayGroup aria-label="Network, sound, battery"><Wifi /><Speaker /><Battery /></TrayGroup>
          <Lines $align="right"><span>22:36</span><span>17-07-2023</span></Lines>
          <Badge>37</Badge>
        </Tray>
      </Taskbar>
    </Desktop>
  );
}
